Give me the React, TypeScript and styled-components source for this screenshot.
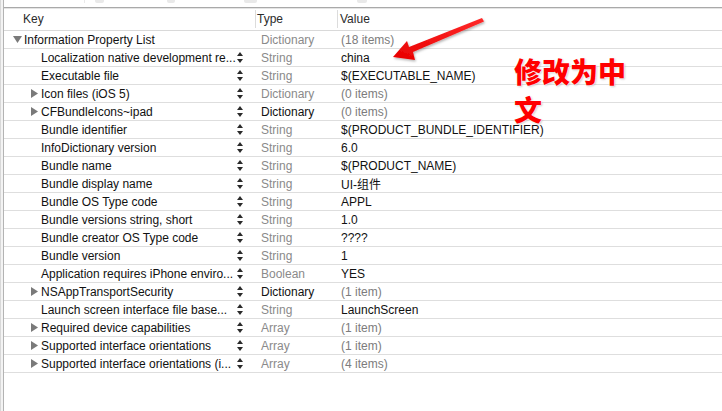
import React from "react";
import styled, { createGlobalStyle } from "styled-components";

const Global = createGlobalStyle`
  html, body { margin: 0; padding: 0; background: #fff; overflow: hidden; }
  body { font-family: "Liberation Sans", Arial, sans-serif; }
`;

type Row = {
  key: string;
  type: string;
  value: string;
  depth: number;
  toggle?: "open" | "closed";
  typeDark?: boolean;
  valueMuted?: boolean;
  stepper?: boolean;
};

const rows: Row[] = [
  { key: "Information Property List", type: "Dictionary", value: "(18 items)", depth: 0, toggle: "open", valueMuted: true },
  { key: "Localization native development re...", type: "String", value: "china", depth: 1, stepper: true },
  { key: "Executable file", type: "String", value: "$(EXECUTABLE_NAME)", depth: 1, stepper: true },
  { key: "Icon files (iOS 5)", type: "Dictionary", value: "(0 items)", depth: 1, toggle: "closed", valueMuted: true, stepper: true },
  { key: "CFBundleIcons~ipad", type: "Dictionary", value: "(0 items)", depth: 1, toggle: "closed", typeDark: true, valueMuted: true, stepper: true },
  { key: "Bundle identifier", type: "String", value: "$(PRODUCT_BUNDLE_IDENTIFIER)", depth: 1, stepper: true },
  { key: "InfoDictionary version", type: "String", value: "6.0", depth: 1, stepper: true },
  { key: "Bundle name", type: "String", value: "$(PRODUCT_NAME)", depth: 1, stepper: true },
  { key: "Bundle display name", type: "String", value: "UI-组件", depth: 1, stepper: true },
  { key: "Bundle OS Type code", type: "String", value: "APPL", depth: 1, stepper: true },
  { key: "Bundle versions string, short", type: "String", value: "1.0", depth: 1, stepper: true },
  { key: "Bundle creator OS Type code", type: "String", value: "????", depth: 1, stepper: true },
  { key: "Bundle version", type: "String", value: "1", depth: 1, stepper: true },
  { key: "Application requires iPhone enviro...", type: "Boolean", value: "YES", depth: 1, stepper: true },
  { key: "NSAppTransportSecurity", type: "Dictionary", value: "(1 item)", depth: 1, toggle: "closed", typeDark: true, valueMuted: true, stepper: true },
  { key: "Launch screen interface file base...", type: "String", value: "LaunchScreen", depth: 1, stepper: true },
  { key: "Required device capabilities", type: "Array", value: "(1 item)", depth: 1, toggle: "closed", valueMuted: true, stepper: true },
  { key: "Supported interface orientations", type: "Array", value: "(1 item)", depth: 1, toggle: "closed", valueMuted: true, stepper: true },
  { key: "Supported interface orientations (i...", type: "Array", value: "(4 items)", depth: 1, toggle: "closed", valueMuted: true, stepper: true },
];

const Window = styled.div`
  position: relative;
  width: 722px;
  height: 411px;
  display: flex;
  background: #fff;
  overflow: hidden;
`;

const Gutter = styled.div`
  width: 3px;
  flex: none;
  background: linear-gradient(to right, #d8d8d8 0 1px, #f3f3f3 1px 3px);
  border-right: 1px solid #b3b3b3;
`;

const Main = styled.div`
  flex: 1;
  display: flex;
  flex-direction: column;
  min-width: 0;
`;

const TopStrip = styled.div`
  height: 7px;
  flex: none;
  display: flex;
  align-items: flex-start;
  border-bottom: 1px solid #a9a9a9;
  box-shadow: 0 1px 0 #e4e4e4;
`;

const StripBit = styled.div<{ $left: number; $w: number }>`
  margin-left: ${(p) => p.$left}px;
  width: ${(p) => p.$w}px;
  height: 3px;
  background: #e9e9e9;
  border-radius: 0 0 2px 2px;
`;

const Grid = styled.div`
  display: grid;
  grid-template-columns: 251px 82px 1fr;
`;

const HeaderCell = styled.div<{ $sep?: boolean; $pad: number }>`
  position: relative;
  height: 22px;
  display: flex;
  align-items: center;
  padding-left: ${(p) => p.$pad}px;
  font-size: 12px;
  color: #2b2b2b;
  border-bottom: 1px solid #d9d9d9;
  ${(p) =>
    p.$sep &&
    `&::before { content: ""; position: absolute; left: 0; top: 2px; bottom: 2px; width: 1px; background: #dcdcdc; }`}
`;

const Cell = styled.div`
  height: 17px;
  border-bottom: 1px solid #dedede;
  display: flex;
  align-items: center;
  font-size: 12px;
  white-space: nowrap;
  min-width: 0;
`;

const KeyCell = styled(Cell)<{ $depth: number }>`
  padding-left: ${(p) => 9 + p.$depth * 17}px;
  color: #111;
`;

const ToggleSlot = styled.span`
  width: 11px;
  flex: none;
  display: flex;
  align-items: center;
`;

const KeyLabel = styled.span`
  flex: 1;
  min-width: 0;
  white-space: nowrap;
`;

const StepperBox = styled.span`
  width: 6px;
  flex: none;
  margin: 0 12px 0 2px;
  display: flex;
  align-items: center;
`;

const TypeCell = styled(Cell)<{ $dark?: boolean }>`
  padding-left: 6px;
  color: ${(p) => (p.$dark ? "#111" : "#8a8a8a")};
`;

const ValueCell = styled(Cell)<{ $muted?: boolean }>`
  padding-left: 4px;
  color: ${(p) => (p.$muted ? "#7c7c7c" : "#111")};
  font-family: "Liberation Sans", "Noto Sans CJK SC", sans-serif;
`;

const Annotation = styled.div`
  position: absolute;
  left: 514px;
  top: 52px;
  width: 118px;
  font-family: "Noto Sans CJK SC", sans-serif;
  font-weight: 900;
  font-size: 28px;
  line-height: 38px;
  color: #ff0000;
  text-shadow: 0 0 2px #fff, 0 0 2px #fff, 1px 1px 2px rgba(0, 0, 0, 0.25);
`;

const ArrowSvg = styled.svg`
  position: absolute;
  left: 385px;
  top: 12px;
  overflow: visible;
`;

const Triangle = ({ open }: { open: boolean }) =>
  open ? (
    <svg width="9" height="7" viewBox="0 0 9 7">
      <path d="M0 0 L9 0 L4.5 7 Z" fill="#7a7a7a" />
    </svg>
  ) : (
    <svg width="7" height="9" viewBox="0 0 7 9" style={{ marginLeft: 1 }}>
      <path d="M0 0 L7 4.5 L0 9 Z" fill="#7a7a7a" />
    </svg>
  );

const Stepper = () => (
  <svg width="6" height="11" viewBox="0 0 6 11">
    <path d="M3 0 L6 4 L0 4 Z" fill="#2a2a2a" />
    <path d="M0 7 L6 7 L3 11 Z" fill="#2a2a2a" />
  </svg>
);

export default function App() {
  return (
    <>
      <Global />
      <Window>
        <Gutter />
        <Main>
          <TopStrip>
            <StripBit $left={80} $w={1} />
            <StripBit $left={10} $w={9} />
            <StripBit $left={63} $w={8} />
            <StripBit $left={69} $w={13} />
            <StripBit $left={100} $w={10} />
          </TopStrip>
          <Grid>
            <HeaderCell $pad={19}>Key</HeaderCell>
            <HeaderCell $pad={2} $sep>Type</HeaderCell>
            <HeaderCell $pad={3} $sep>Value</HeaderCell>
            {rows.map((r, i) => (
              <React.Fragment key={i}>
                <KeyCell $depth={r.depth}>
                  <ToggleSlot>{r.toggle && <Triangle open={r.toggle === "open"} />}</ToggleSlot>
                  <KeyLabel>{r.key}</KeyLabel>
                  {r.stepper && (
                    <StepperBox>
                      <Stepper />
                    </StepperBox>
                  )}
                </KeyCell>
                <TypeCell $dark={r.typeDark}>{r.type}</TypeCell>
                <ValueCell $muted={r.valueMuted}>{r.value}</ValueCell>
              </React.Fragment>
            ))}
          </Grid>
        </Main>
        <ArrowSvg width="110" height="60" viewBox="0 0 110 60">
          <defs>
            <linearGradient id="ag" x1="0" y1="1" x2="1" y2="0">
              <stop offset="0" stopColor="#e80000" />
              <stop offset="1" stopColor="#ff2a2a" />
            </linearGradient>
            <filter id="sh" x="-20%" y="-20%" width="140%" height="160%">
              <feDropShadow dx="1" dy="1.5" stdDeviation="1" floodColor="#000" floodOpacity="0.3" />
            </filter>
          </defs>
          <path
            d="M97 6 L99 9.5 L28 40 L30 48 L8 45 L22 29 L24 35 Z"
            fill="url(#ag)"
            filter="url(#sh)"
          />
        </ArrowSvg>
        <Annotation>修改为中文</Annotation>
      </Window>
    </>
  );
}
